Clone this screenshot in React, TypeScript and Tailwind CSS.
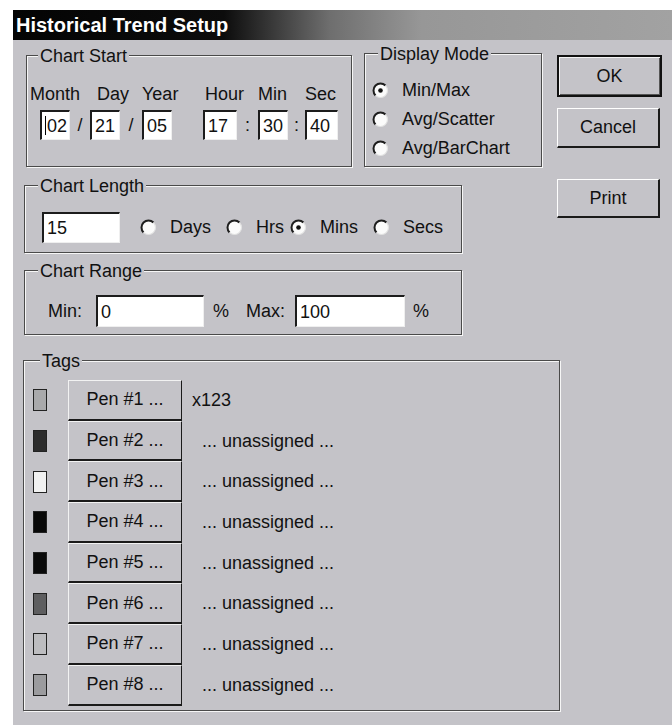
import type { ReactNode } from 'react';

const FACE = 'bg-[#c4c3c8]';

function Group({
  label,
  labelClass = 'left-[13px]',
  className,
  children,
}: {
  label: string;
  labelClass?: string;
  className: string;
  children?: ReactNode;
}) {
  return (
    <div
      className={`relative border border-[#4a4a4a] shadow-[inset_1px_1px_0_#f6f6f6,1px_1px_0_#f6f6f6] ${className}`}
    >
      <span className={`absolute -top-[10px] ${labelClass} ${FACE} px-[2px] leading-5`}>{label}</span>
      {children}
    </div>
  );
}

function Field({ value, className, caret }: { value: string; className: string; caret?: boolean }) {
  return (
    <div
      className={`flex items-center bg-white pl-[3px] leading-none border-t-2 border-l-2 border-b border-r border-t-[#1c1c1c] border-l-[#1c1c1c] border-b-[#efefef] border-r-[#efefef] ${className}`}
    >
      {caret && <span className="mr-px h-[19px] w-px bg-black" />}
      {value}
    </div>
  );
}

function Radio({ checked }: { checked?: boolean }) {
  return (
    <svg width="17" height="17" viewBox="0 0 17 17" className="shrink-0">
      <circle cx="8.5" cy="8.5" r="7" fill="#fbfbfb" />
      <path d="M13.45 3.55 A7 7 0 0 0 3.55 13.45" fill="none" stroke="#1e1e1e" strokeWidth="2" />
      <path d="M13.45 3.55 A7 7 0 0 1 3.55 13.45" fill="none" stroke="#e2e2e2" strokeWidth="1.2" />
      {checked && <circle cx="8.5" cy="8.5" r="2.3" fill="#111" />}
    </svg>
  );
}

function Option({ label, checked, className = '' }: { label: string; checked?: boolean; className?: string }) {
  return (
    <div className={`flex items-center gap-[13px] ${className}`}>
      <Radio checked={checked} />
      <span>{label}</span>
    </div>
  );
}

const pens = [
  { swatch: 'bg-[#a9a9ab]', tag: 'x123' },
  { swatch: 'bg-[#2c2c2c]', tag: '... unassigned ...' },
  { swatch: 'bg-[#f1f1f1]', tag: '... unassigned ...' },
  { swatch: 'bg-[#080808]', tag: '... unassigned ...' },
  { swatch: 'bg-[#0a0a0a]', tag: '... unassigned ...' },
  { swatch: 'bg-[#5e5e60]', tag: '... unassigned ...' },
  { swatch: 'bg-[#bdbdc0]', tag: '... unassigned ...' },
  { swatch: 'bg-[#9b9b9e]', tag: '... unassigned ...' },
];

export default function App() {
  return (
    <div className="h-[725px] w-[672px] bg-white pl-[13px] pt-[10px] font-['Liberation_Sans',Arial,sans-serif] text-[18px] text-[#111]">
      <div className={`h-[715px] ${FACE}`}>
        <div className="flex h-[30px] items-center bg-[linear-gradient(90deg,#040404_0%,#0c0c0c_32%,#6e6e6e_48%,#979797_62%,#a2a2a2_100%)] pl-[3px] text-[20px] font-bold text-white">
          Historical Trend Setup
        </div>

        <div className="pl-[11px] pt-[13px]">
          <div className="flex">
            <div className="w-[518px]">
              <div className="flex items-start">
                <Group label="Chart Start" labelClass="left-[11px]" className="ml-[2px] mt-[2px] h-[112px] w-[326px]">
                  <div className="mt-[28px] flex pl-[3px] leading-5">
                    <span className="w-[67px]">Month</span>
                    <span className="w-[45px]">Day</span>
                    <span className="w-[63px]">Year</span>
                    <span className="w-[53px]">Hour</span>
                    <span className="w-[47px]">Min</span>
                    <span>Sec</span>
                  </div>
                  <div className="mt-[6px] flex items-center pl-[13px]">
                    <Field value="02" caret className="h-[30px] w-[30px]" />
                    <span className="w-[20px] text-center">/</span>
                    <Field value="21" className="h-[30px] w-[30px]" />
                    <span className="w-[22px] text-center">/</span>
                    <Field value="05" className="h-[30px] w-[30px]" />
                    <Field value="17" className="ml-[31px] h-[30px] w-[34px]" />
                    <span className="w-[21px] text-center">:</span>
                    <Field value="30" className="h-[30px] w-[30px]" />
                    <span className="w-[17px] text-center">:</span>
                    <Field value="40" className="h-[30px] w-[33px]" />
                  </div>
                </Group>

                <Group label="Display Mode" className="ml-[12px] h-[114px] w-[178px]">
                  <div className="pl-[7px] pt-[22px]">
                    <Option label="Min/Max" checked className="h-[29px]" />
                    <Option label="Avg/Scatter" className="h-[29px]" />
                    <Option label="Avg/BarChart" className="h-[29px]" />
                  </div>
                </Group>
              </div>

              <Group label="Chart Length" className="mt-[18px] h-[68px] w-[438px]">
                <div className="flex items-center pl-[17px] pt-[26px]">
                  <Field value="15" className="h-[31px] w-[78px]" />
                  <div className="ml-[20px] flex items-center">
                    <Option label="Days" className="w-[86px]" />
                    <Option label="Hrs" className="w-[64px]" />
                    <Option label="Mins" checked className="w-[83px]" />
                    <Option label="Secs" />
                  </div>
                </div>
              </Group>

              <Group label="Chart Range" className="mt-[17px] h-[65px] w-[438px]">
                <div className="flex items-center pl-[23px] pt-[24px]">
                  <span className="w-[48px]">Min:</span>
                  <Field value="0" className="h-[32px] w-[108px]" />
                  <span className="ml-[9px] w-[33px]">%</span>
                  <span className="w-[49px]">Max:</span>
                  <Field value="100" className="h-[32px] w-[110px]" />
                  <span className="ml-[8px]">%</span>
                </div>
              </Group>
            </div>

            <div className="ml-[15px] mt-[2px] flex flex-col">
              <button className="h-[42px] w-[105px] border-2 border-[#111] shadow-[inset_1px_1px_0_#f4f4f4,inset_-1px_-1px_0_#555]">
                OK
              </button>
              <button className="mt-[11px] h-[40px] w-[103px] border-b-2 border-r-2 border-l border-t border-b-[#1a1a1a] border-r-[#1a1a1a] border-l-white border-t-white">
                Cancel
              </button>
              <button className="mt-[31px] h-[39px] w-[103px] border-b-2 border-r-2 border-l border-t border-b-[#1a1a1a] border-r-[#1a1a1a] border-l-white border-t-white">
                Print
              </button>
            </div>
          </div>

          <Group label="Tags" labelClass="left-[16px]" className="-ml-px mt-[25px] h-[351px] w-[537px]">
            <div className="pt-[19px]">
              {pens.map((pen, i) => (
                <div key={i} className="flex h-[40.7px] items-center">
                  <span className={`ml-[9px] h-[22px] w-[14px] border border-[#222] ${pen.swatch}`} />
                  <button className="ml-[21px] h-full w-[114px] border-b-2 border-r border-l border-t border-b-[#1a1a1a] border-r-[#1a1a1a] border-l-[#f2f2f2] border-t-[#f2f2f2] text-center">
                    Pen #{i + 1} ...
                  </button>
                  <span className={i === 0 ? 'ml-[10px]' : 'ml-[20px]'}>{pen.tag}</span>
                </div>
              ))}
            </div>
          </Group>
        </div>
      </div>
    </div>
  );
}
